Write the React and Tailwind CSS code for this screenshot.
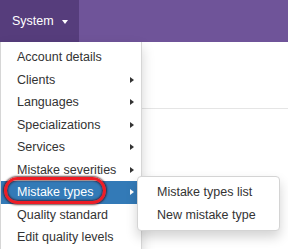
const items = [
  { label: 'Account details' },
  { label: 'Clients', sub: true },
  { label: 'Languages', sub: true },
  { label: 'Specializations', sub: true },
  { label: 'Services', sub: true },
  { label: 'Mistake severities', sub: true },
  { label: 'Mistake types', sub: true, active: true },
  { label: 'Quality standard' },
  { label: 'Edit quality levels' },
];

const Arrow = ({ white }) => (
  <span
    className={`absolute right-[7px] top-[8px] w-0 h-0 border-y-[3px] border-y-transparent border-l-[4px] ${white ? 'border-l-white' : 'border-l-[#333]'}`}
  />
);

export default function App() {
  return (
    <div className="relative w-[288px] h-[249px] overflow-hidden bg-white font-['Liberation_Sans',Arial,sans-serif] text-[12.5px]">
      <div className="flex h-[42px] bg-[#6f5499]">
        <div className="flex items-center w-[79px] pl-[12px] bg-[#563d7c] text-white text-[12.5px]">
          <span>System</span>
          <span className="ml-[8px] mt-[1px] w-0 h-0 border-x-[3px] border-x-transparent border-t-[4px] border-t-white" />
        </div>
      </div>
      <div className="h-[67px] border-b border-[#e5e5e5]" />

      <ul className="absolute left-0 top-[42px] w-[142px] py-[4px] bg-white border border-t-0 border-[#d6d6d6] shadow-[0_6px_12px_rgba(0,0,0,0.175)]">
        {items.map((item) => (
          <li
            key={item.label}
            className={`relative h-[22.5px] leading-[22.5px] pl-[16px] whitespace-nowrap ${item.active ? 'bg-[#337ab7] text-white' : 'text-[#333]'}`}
          >
            {item.label}
            {item.sub && <Arrow white={item.active} />}
            {item.active && (
              <>
                <span className="absolute left-[3px] top-[-4px] w-[102px] h-[27px] rounded-full border-[3.5px] border-[#ee1c24] shadow-[0_0_2px_1px_rgba(50,0,0,0.7),inset_0_0_2px_1px_rgba(50,0,0,0.6)]" />
                <div className="absolute left-[136px] top-[-5px] w-[143px] py-[4px] bg-white border border-[#d4d4d4] rounded-[4px] shadow-[0_6px_12px_rgba(0,0,0,0.175)] text-[#333]">
                  <div className="h-[22.5px] leading-[22.5px] pl-[19px]">Mistake types list</div>
                  <div className="h-[22.5px] leading-[22.5px] pl-[19px]">New mistake type</div>
                </div>
              </>
            )}
          </li>
        ))}
      </ul>
    </div>
  );
}
